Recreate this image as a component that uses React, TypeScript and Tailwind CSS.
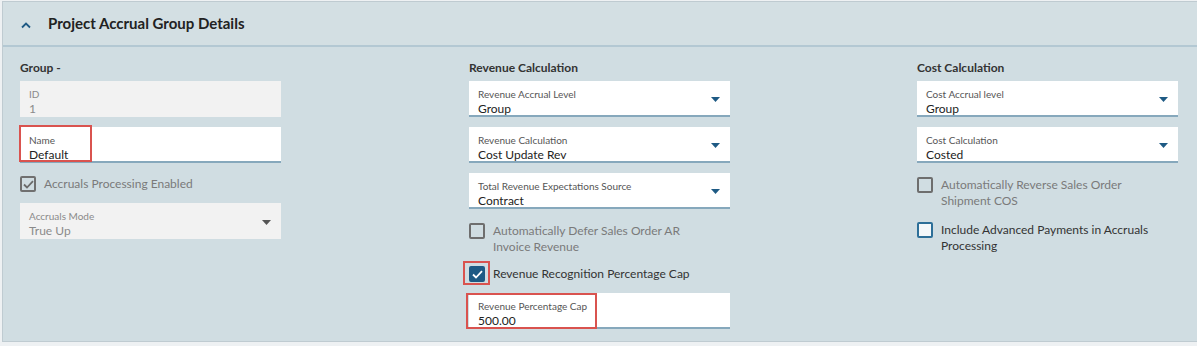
import React from "react";

const font = { fontFamily: '"Lato", "Liberation Sans", sans-serif' };

function Caret({ disabled }: { disabled?: boolean }) {
  return (
    <svg width="9" height="5" viewBox="0 0 9 5" className="shrink-0 mt-[3px]">
      <path d="M0 0 L9 0 L4.5 5 Z" fill={disabled ? "#555555" : "#1e5a84"} />
    </svg>
  );
}

function Field({
  label,
  value,
  disabled,
  select,
  highlight,
}: {
  label: string;
  value: string;
  disabled?: boolean;
  select?: boolean;
  highlight?: string;
}) {
  return (
    <div
      className={`relative h-[36px] w-[261px] flex items-center pl-[9px] pr-[10px] ${
        disabled ? "bg-[#f2f2f2]" : "bg-white border-b-2 border-[#86a8bc]"
      }`}
    >
      <div className="flex-1 self-start pt-[7px] flex flex-col">
        <span className={`text-[10px] leading-[12px] ${disabled ? "text-[#8a8a8a]" : "text-[#555]"}`}>{label}</span>
        <span className={`mt-[1px] text-[12px] leading-[15px] ${disabled ? "text-[#8a8a8a]" : "text-[#222]"}`}>{value}</span>
      </div>
      {select && <Caret disabled={disabled} />}
      {highlight && (
        <div className={`absolute border-2 border-[#d9534f] ${highlight}`} />
      )}
    </div>
  );
}

function Checkbox({
  state,
  label,
  muted,
  highlight,
}: {
  state: "off" | "on" | "disabledOn" | "offBlue";
  label: React.ReactNode;
  muted?: boolean;
  highlight?: boolean;
}) {
  let box = "border-2 border-[#6e6e6e] bg-transparent";
  if (state === "on") box = "bg-[#1e5a84] border-2 border-[#1e5a84]";
  if (state === "offBlue") box = "border-2 border-[#2d6f98] bg-[#f4f8fa]";
  if (state === "disabledOn") box = "border-2 border-[#707070] bg-transparent";
  return (
    <div className="flex items-start gap-[8px] w-[280px]">
      <div className="relative shrink-0">
        <div className={`w-[16px] h-[16px] rounded-[2px] flex items-center justify-center ${box}`}>
          {(state === "on" || state === "disabledOn") && (
            <svg width="11" height="9" viewBox="0 0 11 9">
              <path
                d="M1 4.5 L4 7.5 L10 1.2"
                fill="none"
                stroke={state === "on" ? "#ffffff" : "#6b6b6b"}
                strokeWidth="1.8"
              />
            </svg>
          )}
        </div>
        {highlight && (
          <div className="absolute -left-[6px] -top-[5px] w-[27px] h-[24px] border-2 border-[#d9534f]" />
        )}
      </div>
      <span className={`text-[12px] leading-[16px] ${muted ? "text-[#7a7a7a]" : "text-[#333]"}`}>{label}</span>
    </div>
  );
}

export default function App() {
  return (
    <div style={font} className="w-[1197px] h-[346px] bg-[#eef1f3] overflow-hidden">
      <div className="ml-[2px] mt-[1px] h-[341px] border-t border-l border-b border-[#bfcbd1] bg-[#d0dde2] flex flex-col">
        <div className="h-[45px] bg-[#d3dfe3] border-b-2 border-[#b3c8d3] flex items-center pl-[17px] gap-[16px]">
          <svg width="12" height="8" viewBox="0 0 12 8" className="mt-[2px]">
            <path d="M2 6.5 L6 2.5 L10 6.5" fill="none" stroke="#1e5a84" strokeWidth="1.8" />
          </svg>
          <span className="text-[15px] font-bold text-[#222]">Project Accrual Group Details</span>
        </div>
        <div className="grid grid-cols-[449px_448px_1fr] pl-[17px] pt-[12px]">
          <div className="flex flex-col">
            <div className="text-[12px] font-bold text-[#333] h-[22px]">Group -</div>
            <div className="flex flex-col gap-[10px]">
              <Field label="ID" value="1" disabled />
              <Field label="Name" value="Default" highlight="-left-[1px] -top-[2px] w-[73px] h-[37px]" />
            </div>
            <div className="mt-[13px]">
              <Checkbox state="disabledOn" label="Accruals Processing Enabled" muted />
            </div>
            <div className="mt-[11px]">
              <Field label="Accruals Mode" value="True Up" disabled select />
            </div>
          </div>
          <div className="flex flex-col">
            <div className="text-[12px] font-bold text-[#333] h-[22px]">Revenue Calculation</div>
            <div className="flex flex-col gap-[10px]">
              <Field label="Revenue Accrual Level" value="Group" select />
              <Field label="Revenue Calculation" value="Cost Update Rev" select />
              <Field label="Total Revenue Expectations Source" value="Contract" select />
            </div>
            <div className="mt-[14px]">
              <Checkbox
                state="off"
                muted
                label={
                  <>
                    Automatically Defer Sales Order AR
                    <br />
                    Invoice Revenue
                  </>
                }
              />
            </div>
            <div className="mt-[11px]">
              <Checkbox state="on" label="Revenue Recognition Percentage Cap" highlight />
            </div>
            <div className="mt-[11px]">
              <Field
                label="Revenue Percentage Cap"
                value="500.00"
                highlight="-left-[3px] -top-[0px] w-[131px] h-[36px]"
              />
            </div>
          </div>
          <div className="flex flex-col">
            <div className="text-[12px] font-bold text-[#333] h-[22px]">Cost Calculation</div>
            <div className="flex flex-col gap-[10px]">
              <Field label="Cost Accrual level" value="Group" select />
              <Field label="Cost Calculation" value="Costed" select />
            </div>
            <div className="mt-[14px]">
              <Checkbox
                state="off"
                muted
                label={
                  <>
                    Automatically Reverse Sales Order
                    <br />
                    Shipment COS
                  </>
                }
              />
            </div>
            <div className="mt-[13px]">
              <Checkbox
                state="offBlue"
                label={
                  <>
                    Include Advanced Payments in Accruals
                    <br />
                    Processing
                  </>
                }
              />
            </div>
          </div>
        </div>
      </div>
    </div>
  );
}
